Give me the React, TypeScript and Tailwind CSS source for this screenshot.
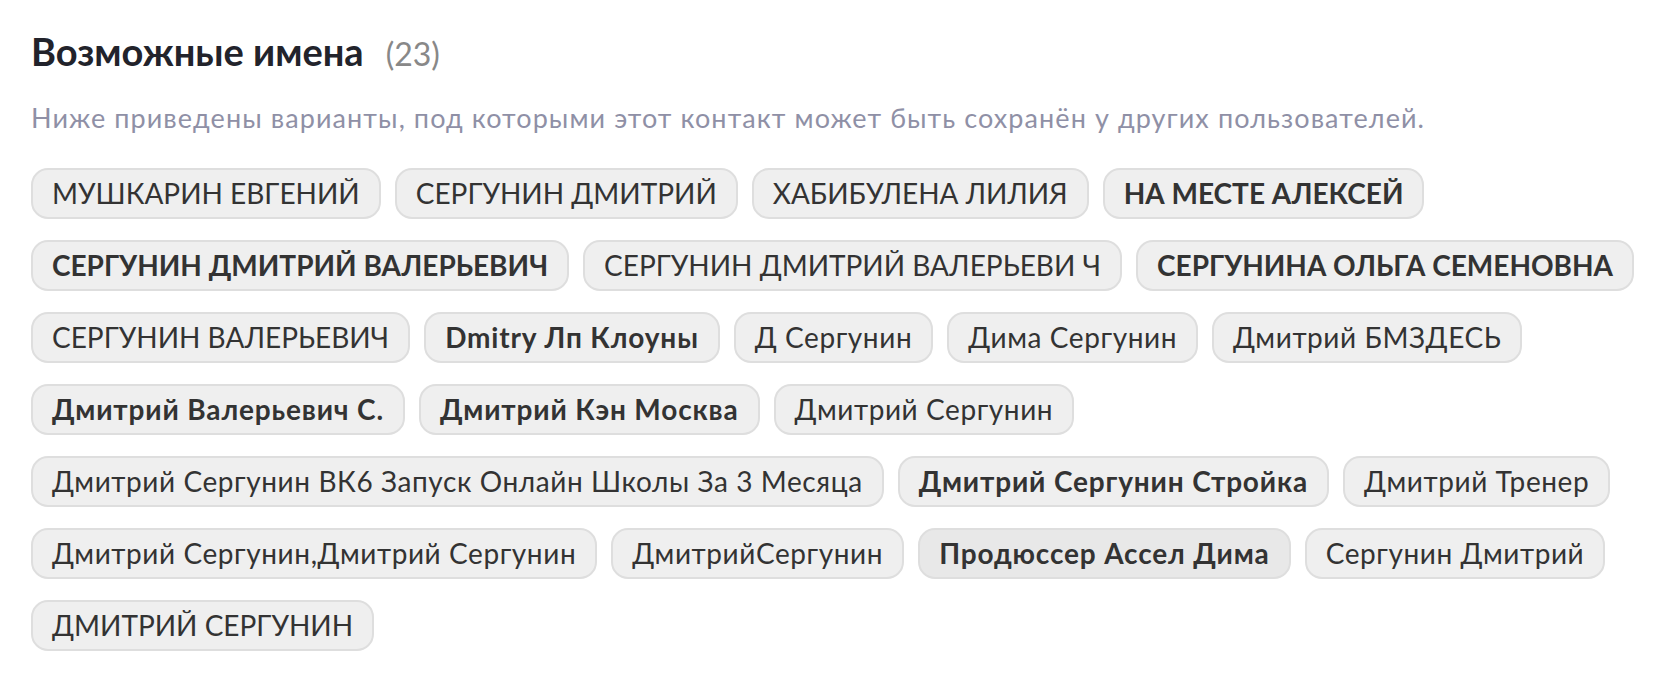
import React from "react";

const names: { t: string; b?: boolean; h?: boolean }[] = [
  { t: "МУШКАРИН ЕВГЕНИЙ" },
  { t: "СЕРГУНИН ДМИТРИЙ" },
  { t: "ХАБИБУЛЕНА ЛИЛИЯ" },
  { t: "НА МЕСТЕ АЛЕКСЕЙ", b: true },
  { t: "СЕРГУНИН ДМИТРИЙ ВАЛЕРЬЕВИЧ", b: true },
  { t: "СЕРГУНИН ДМИТРИЙ ВАЛЕРЬЕВИ Ч" },
  { t: "СЕРГУНИНА ОЛЬГА СЕМЕНОВНА", b: true },
  { t: "СЕРГУНИН ВАЛЕРЬЕВИЧ" },
  { t: "Dmitry Лп Клоуны", b: true },
  { t: "Д Сергунин" },
  { t: "Дима Сергунин" },
  { t: "Дмитрий БМЗДЕСЬ" },
  { t: "Дмитрий Валерьевич С.", b: true },
  { t: "Дмитрий Кэн Москва", b: true },
  { t: "Дмитрий Сергунин" },
  { t: "Дмитрий Сергунин ВК6 Запуск Онлайн Школы За 3 Месяца" },
  { t: "Дмитрий Сергунин Стройка", b: true },
  { t: "Дмитрий Тренер" },
  { t: "Дмитрий Сергунин,Дмитрий Сергунин" },
  { t: "ДмитрийСергунин" },
  { t: "Продюссер Ассел Дима", b: true, h: true },
  { t: "Сергунин Дмитрий" },
  { t: "ДМИТРИЙ СЕРГУНИН" },
];

function trackingFor(n: { t: string; b?: boolean }) {
  const caps = n.t === n.t.toUpperCase();
  if (caps) return "tracking-[0px]";
  return n.b ? "tracking-[0.85px]" : "tracking-[0.58px]";
}

export default function App() {
  return (
    <div
      className="min-h-[696px] w-[1672px] bg-white px-[31px] pt-[28px]"
      style={{ fontFamily: "Lato, 'Noto Sans', sans-serif" }}
    >
      <div className="flex items-baseline">
        <h2 className="text-[38px] font-bold leading-[46px] text-[#22232b]">Возможные имена</h2>
        <span className="ml-[22px] text-[32px] leading-[46px] text-[#888888]">(23)</span>
      </div>
      <p className="mt-[25px] text-[27px] leading-[32px] tracking-[1.08px] text-[#8f90a6]">
        Ниже приведены варианты, под которыми этот контакт может быть сохранён у других пользователей.
      </p>
      <div className="mt-[34px] flex flex-wrap gap-x-[14px] gap-y-[21px]">
        {names.map((n, i) => (
          <span
            key={i}
            className={
              (n.h ? "bg-[#e8e8e8] " : "bg-[#efefef] ") +
              (n.b ? "font-bold " : "font-normal ") +
              trackingFor(n) +
              " rounded-[17px] border-2 border-[#dedede] px-[19px] py-[8px] text-[28px] leading-[31px] text-[#333333]"
            }
          >
            {n.t}
          </span>
        ))}
      </div>
    </div>
  );
}
